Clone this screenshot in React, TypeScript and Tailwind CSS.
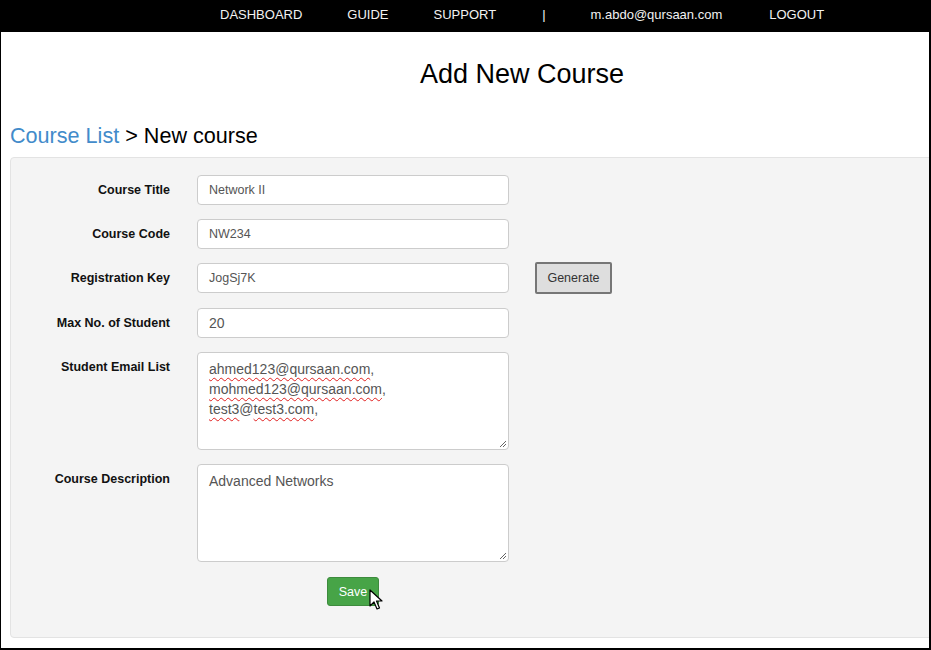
import React from "react";

const font = { fontFamily: '"Liberation Sans", Arial, sans-serif' };

function Label({ children }: { children: React.ReactNode }) {
  return (
    <div className="w-[159px] shrink-0 pt-[6px] text-right text-[12.5px] font-bold leading-[18px] text-[#111]">
      {children}
    </div>
  );
}

function Field({ value, small = true }: { value: string; small?: boolean }) {
  return (
    <div
      className={
        "flex h-[30px] w-[312px] items-center rounded-[4px] border border-[#ccc] bg-white px-[11px] pt-[1px] text-[#555] " +
        (small ? "text-[12.5px]" : "text-[14px]")
      }
    >
      {value}
    </div>
  );
}

function Wavy({ children }: { children: React.ReactNode }) {
  return (
    <span className="underline decoration-wavy decoration-[#e02020] decoration-1 underline-offset-[3px]">
      {children}
    </span>
  );
}

function ResizeGrip() {
  return (
    <svg
      className="absolute bottom-[1px] right-[1px]"
      width="8"
      height="8"
      viewBox="0 0 8 8"
    >
      <path d="M7 1 L1 7 M7 4 L4 7" stroke="#666" strokeWidth="1" />
    </svg>
  );
}

function Cursor() {
  return (
    <svg
      className="absolute left-[42px] top-[12px]"
      width="14"
      height="22"
      viewBox="0 0 14 22"
    >
      <path
        d="M1 1 L1 17 L5 13 L8 20 L10.5 19 L7.5 12 L13 12 Z"
        fill="#fff"
        stroke="#000"
        strokeWidth="1.2"
        strokeLinejoin="round"
      />
    </svg>
  );
}

export default function App() {
  return (
    <div
      style={font}
      className="h-[650px] w-[931px] overflow-hidden border-b-2 border-l border-r-2 border-black bg-white"
    >
      <nav className="flex h-[32px] items-center bg-black pb-[2px] pl-[219px] text-[13px] text-[#f2f2f2]">
        <span>DASHBOARD</span>
        <span className="ml-[45px]">GUIDE</span>
        <span className="ml-[45px]">SUPPORT</span>
        <span className="ml-[46px]">|</span>
        <span className="ml-[45px]">m.abdo@qursaan.com</span>
        <span className="ml-[47px]">LOGOUT</span>
      </nav>

      <h1 className="mt-[27px] pl-[419px] text-[27px] leading-[31px] text-black">
        Add New Course
      </h1>

      <div className="mt-[33px] pl-[9px] text-[21.6px] leading-[25px] text-black">
        <span className="text-[#428bca]">Course List</span> &gt; New course
      </div>

      <div className="ml-[9px] mt-[9px] w-[940px] rounded-[4px] border border-[#e3e3e3] bg-[#f4f4f4] pb-[31px] pt-[17px]">
        <div className="flex flex-col gap-[14px]">
          <div className="flex gap-[27px]">
            <Label>Course Title</Label>
            <Field value="Network II" />
          </div>
          <div className="flex gap-[27px]">
            <Label>Course Code</Label>
            <Field value="NW234" />
          </div>
          <div className="flex items-start gap-[27px]">
            <Label>Registration Key</Label>
            <Field value="JogSj7K" />
            <button className="ml-[-1px] mt-[-1px] h-[32px] w-[77px] rounded-[2px] border-2 border-[#767676] bg-[#dedede] pt-[1px] text-[12.5px] text-[#333]">
              Generate
            </button>
          </div>
          <div className="flex gap-[27px]">
            <Label>Max No. of Student</Label>
            <Field value="20" small={false} />
          </div>
          <div className="flex gap-[27px]">
            <Label>Student Email List</Label>
            <div className="relative h-[98px] w-[312px] rounded-[4px] border border-[#ccc] bg-white px-[11px] py-[6px] text-[14px] leading-[20px] text-[#555]">
              <div>
                <Wavy>ahmed123@qursaan.com</Wavy>,
              </div>
              <div>
                <Wavy>mohmed123@qursaan.com</Wavy>,
              </div>
              <div>
                <Wavy>test3</Wavy>@<Wavy>test3.com</Wavy>,
              </div>
              <ResizeGrip />
            </div>
          </div>
          <div className="flex gap-[27px]">
            <Label>Course Description</Label>
            <div className="relative h-[98px] w-[312px] rounded-[4px] border border-[#ccc] bg-white px-[11px] py-[6px] text-[14px] leading-[20px] text-[#555]">
              Advanced Networks
              <ResizeGrip />
            </div>
          </div>
        </div>

        <div className="ml-[316px] mt-[15px]">
          <div className="relative inline-block">
            <button className="h-[29px] w-[52px] rounded-[3px] border border-[#3d8b3d] bg-[#47a447] pt-[1px] text-[12.5px] text-white">
              Save
            </button>
            <Cursor />
          </div>
        </div>
      </div>
    </div>
  );
}
